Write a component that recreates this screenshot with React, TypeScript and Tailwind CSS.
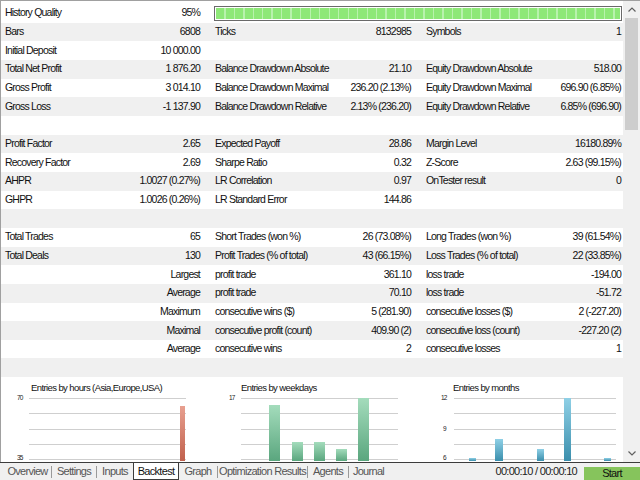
import React from "react";

type Row = [string, string, string, string, string, string] | null;

const rows: Row[] = [
  ["Bars", "6808", "Ticks", "8132985", "Symbols", "1"],
  ["Initial Deposit", "10 000.00", "", "", "", ""],
  ["Total Net Profit", "1 876.20", "Balance Drawdown Absolute", "21.10", "Equity Drawdown Absolute", "518.00"],
  ["Gross Profit", "3 014.10", "Balance Drawdown Maximal", "236.20 (2.13%)", "Equity Drawdown Maximal", "696.90 (6.85%)"],
  ["Gross Loss", "-1 137.90", "Balance Drawdown Relative", "2.13% (236.20)", "Equity Drawdown Relative", "6.85% (696.90)"],
  null,
  ["Profit Factor", "2.65", "Expected Payoff", "28.86", "Margin Level", "16180.89%"],
  ["Recovery Factor", "2.69", "Sharpe Ratio", "0.32", "Z-Score", "2.63 (99.15%)"],
  ["AHPR", "1.0027 (0.27%)", "LR Correlation", "0.97", "OnTester result", "0"],
  ["GHPR", "1.0026 (0.26%)", "LR Standard Error", "144.86", "", ""],
  null,
  ["Total Trades", "65", "Short Trades (won %)", "26 (73.08%)", "Long Trades (won %)", "39 (61.54%)"],
  ["Total Deals", "130", "Profit Trades (% of total)", "43 (66.15%)", "Loss Trades (% of total)", "22 (33.85%)"],
  ["", "Largest", "profit trade", "361.10", "loss trade", "-194.00"],
  ["", "Average", "profit trade", "70.10", "loss trade", "-51.72"],
  ["", "Maximum", "consecutive wins ($)", "5 (281.90)", "consecutive losses ($)", "2 (-227.20)"],
  ["", "Maximal", "consecutive profit (count)", "409.90 (2)", "consecutive loss (count)", "-227.20 (2)"],
  ["", "Average", "consecutive wins", "2", "consecutive losses", "1"],
  null,
];

const svgFont = "Liberation Sans, Arial, sans-serif";

function Cell({ label, value, first }: { label: string; value: string; first?: boolean }) {
  return (
    <div className={`flex items-center justify-between ${first ? "pl-1 pr-3" : "pl-[3px] pr-3"}`}>
      <span className="whitespace-nowrap">{label}</span>
      <span className="whitespace-nowrap">{value}</span>
    </div>
  );
}

type Bar = { x: number; w: number; top: number };

function Chart({
  id,
  title,
  titleX,
  labels,
  bars,
  from,
  to,
  lineX,
}: {
  id: string;
  title: string;
  titleX: number;
  labels: { t: string; x: number; y: number }[];
  bars: Bar[];
  from: string;
  to: string;
  lineX: [number, number];
}) {
  return (
    <svg width="211" height="84" className="block shrink-0">
      <defs>
        <linearGradient id={id} x1="0" y1="0" x2="0" y2="1">
          <stop offset="0" stopColor={from} />
          <stop offset="1" stopColor={to} />
        </linearGradient>
      </defs>
      <text x={titleX} y="14" fontSize="9.5" letterSpacing="-0.6" fill="#111" fontFamily={svgFont}>
        {title}
      </text>
      {[21, 36, 52, 67, 82].map((y) => (
        <line key={y} x1={lineX[0]} x2={lineX[1]} y1={y + 0.5} y2={y + 0.5} stroke="#cfcfcf" strokeWidth="1" />
      ))}
      {labels.map((l) => (
        <text key={l.t} x={l.x} y={l.y} fontSize="6.5" fill="#222" fontFamily={svgFont}>
          {l.t}
        </text>
      ))}
      {bars.map((b, i) => (
        <rect key={i} x={b.x} y={b.top} width={b.w} height={84 - b.top} fill={`url(#${id})`} />
      ))}
    </svg>
  );
}

function Sep() {
  return <div className="w-px h-[12px] self-center bg-[#9a9a9a]" />;
}

export default function App() {
  return (
    <div className="w-[640px] h-[480px] flex flex-col bg-white text-[10.5px] tracking-[-0.8px] text-[#111] overflow-hidden font-['Liberation_Sans',Arial,sans-serif]">
      <div className="flex flex-1 min-h-0">
        {/* report */}
        <div className="w-[623px] flex flex-col border-t border-l border-[#a0a0a0] pt-[3px]">
          <div className="grid grid-cols-[211px_211px_200px] h-[18.67px] bg-white">
            <Cell label="History Quality" value="95%" first />
            <div className="col-span-2 flex items-center pl-[2px] pr-[1px]">
              <div className="h-[15px] w-full border border-[#6a6a6a] p-[1px]">
                <div className="h-full w-full bg-[repeating-linear-gradient(90deg,#8ee878_0px,#8ee878_8px,#b9f2ad_8px,#b9f2ad_9.5px)]" />
              </div>
            </div>
          </div>
          {rows.map((r, i) => (
            <div
              key={i}
              className={`grid grid-cols-[211px_211px_200px] h-[18.67px] ${i % 2 === 0 ? "bg-[#f0f0f0]" : "bg-white"}`}
            >
              {r && (
                <>
                  <Cell label={r[0]} value={r[1]} first />
                  <Cell label={r[2]} value={r[3]} />
                  <div className="flex items-center justify-between pl-[3px] pr-[2px]">
                    <span className="whitespace-nowrap">{r[4]}</span>
                    <span className="whitespace-nowrap">{r[5]}</span>
                  </div>
                </>
              )}
            </div>
          ))}
          {/* charts */}
          <div className="flex flex-1 min-h-0 bg-white overflow-hidden">
            <Chart
              id="gHours"
              title="Entries by hours (Asia,Europe,USA)"
              titleX={30}
              labels={[
                { t: "70", x: 16, y: 23 },
                { t: "35", x: 16, y: 83 },
              ]}
              bars={[{ x: 179, w: 5, top: 29 }]}
              from="#e8a090"
              to="#c0604c"
              lineX={[28, 185]}
            />
            <Chart
              id="gWeek"
              title="Entries by weekdays"
              titleX={29}
              labels={[{ t: "17", x: 17, y: 23 }]}
              bars={[
                { x: 57, w: 11, top: 28 },
                { x: 80, w: 11, top: 65 },
                { x: 102, w: 11, top: 65 },
                { x: 124, w: 11, top: 72 },
                { x: 146, w: 11, top: 21 },
              ]}
              from="#a4dcbc"
              to="#5aa67e"
              lineX={[29, 186]}
            />
            <Chart
              id="gMonth"
              title="Entries by months"
              titleX={30}
              labels={[
                { t: "12", x: 18, y: 23 },
                { t: "9", x: 20, y: 54 },
                { t: "6", x: 20, y: 83 },
              ]}
              bars={[
                { x: 46, w: 7, top: 81 },
                { x: 72, w: 8, top: 62 },
                { x: 114, w: 7, top: 72 },
                { x: 141, w: 7, top: 21 },
                { x: 181, w: 7, top: 81 },
              ]}
              from="#8fd0e6"
              to="#3a8eac"
              lineX={[31, 193]}
            />
          </div>
        </div>
        {/* scrollbar */}
        <div className="w-[17px] flex flex-col bg-[#f0f0f0] border-t border-[#a0a0a0]">
          <div className="h-[17px] flex items-center justify-center">
            <svg width="8" height="5" viewBox="0 0 8 5">
              <path d="M0.5 4.5 L4 1 L7.5 4.5" fill="none" stroke="#606060" strokeWidth="1.2" />
            </svg>
          </div>
          <div className="mx-[2px] h-[112px] bg-[#cdcdcd]" />
          <div className="flex-1" />
          <div className="h-[17px] flex items-center justify-center">
            <svg width="8" height="5" viewBox="0 0 8 5">
              <path d="M0.5 0.5 L4 4 L7.5 0.5" fill="none" stroke="#606060" strokeWidth="1.2" />
            </svg>
          </div>
        </div>
      </div>
      {/* tab bar */}
      <div className="h-[18px] flex items-stretch bg-[#f0f0f0] border-t border-[#3c3c3c] text-[11px] tracking-[-0.7px] text-[#555] whitespace-nowrap">
        <div className="w-[51px] pl-[4px] flex items-center justify-center">Overview</div>
        <Sep />
        <div className="w-[44px] flex items-center justify-center">Settings</div>
        <Sep />
        <div className="w-[36px] flex items-center justify-center">Inputs</div>
        <div className="w-[46px] flex items-center justify-center bg-white border-x border-b border-[#3c3c3c] text-[#111]">Backtest</div>
        <div className="w-[38px] flex items-center justify-center">Graph</div>
        <Sep />
        <div className="w-[89px] flex items-center justify-center">Optimization Results</div>
        <Sep />
        <div className="w-[40px] flex items-center justify-center">Agents</div>
        <Sep />
        <div className="w-[39px] flex items-center justify-center">Journal</div>
        <div className="flex-1" />
        <div className="flex items-center pr-[7px] text-[#222]">00:00:10 / 00:00:10</div>
        <div className="w-[56px] mt-[4px] flex items-center justify-center bg-[#86c45c] text-[#111]">Start</div>
      </div>
    </div>
  );
}
